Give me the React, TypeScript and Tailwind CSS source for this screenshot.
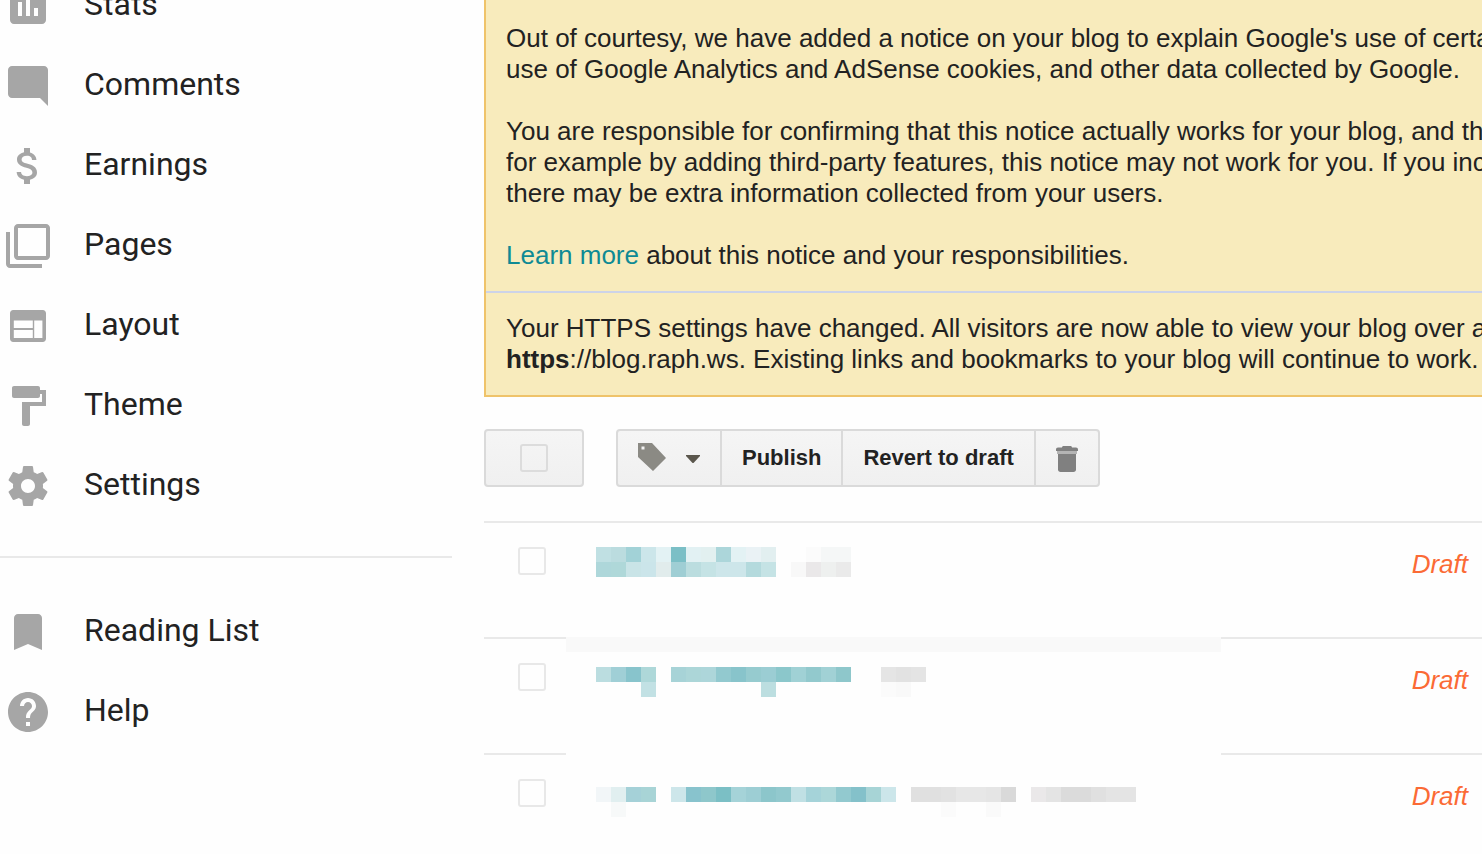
import type { ReactNode } from "react";

type NavItem = { label: string; icon: ReactNode };

const blogNav: NavItem[] = [
  {
    label: "Stats",
    icon: <path d="M19 3H5c-1.1 0-2 .9-2 2v14c0 1.1.9 2 2 2h14c1.1 0 2-.9 2-2V5c0-1.1-.9-2-2-2zM9 17H7v-7h2v7zm4 0h-2V7h2v10zm4 0h-2v-4h2v4z" />,
  },
  {
    label: "Comments",
    icon: <path d="M22 4c0-1.1-.9-2-2-2H4c-1.1 0-2 .9-2 2v12c0 1.1.9 2 2 2h14l4 4V4z" />,
  },
  {
    label: "Earnings",
    icon: <path d="M11.8 10.9c-2.27-.59-3-1.2-3-2.15 0-1.09 1.01-1.85 2.7-1.85 1.78 0 2.44.85 2.5 2.1h2.21c-.07-1.72-1.12-3.3-3.21-3.81V3h-3v2.16c-1.94.42-3.5 1.68-3.5 3.61 0 2.31 1.91 3.46 4.7 4.13 2.5.6 3 1.48 3 2.41 0 .69-.49 1.79-2.7 1.79-2.06 0-2.87-.92-2.98-2.1h-2.2c.12 2.19 1.76 3.42 3.68 3.83V21h3v-2.15c1.95-.37 3.5-1.5 3.5-3.55 0-2.84-2.43-3.81-4.7-4.4z" />,
  },
  {
    label: "Pages",
    icon: <path d="M3 5H1v16c0 1.1.9 2 2 2h16v-2H3V5zm18-4H7c-1.1 0-2 .9-2 2v14c0 1.1.9 2 2 2h14c1.1 0 2-.9 2-2V3c0-1.1-.9-2-2-2zm0 16H7V3h14v14z" />,
  },
  {
    label: "Layout",
    icon: <path fillRule="evenodd" d="M19.4 4H4.6C3.7 4 3 4.7 3 5.6v12.8c0 .9.7 1.6 1.6 1.6h14.8c.9 0 1.6-.7 1.6-1.6V5.6c0-.9-.7-1.6-1.6-1.6zM14.4 13V9.2H4.9V13h9.5zm0 1H4.9v4h9.5v-4zm4.8-4.8h-4.1V18h4.1V9.2z" />,
  },
  {
    label: "Theme",
    icon: <path d="M18 4V3c0-.55-.45-1-1-1H5c-.55 0-1 .45-1 1v4c0 .55.45 1 1 1h12c.55 0 1-.45 1-1V6h1v4H9v11c0 .55.45 1 1 1h2c.55 0 1-.45 1-1v-9h8V4h-3z" />,
  },
  {
    label: "Settings",
    icon: <path d="M19.43 12.98c.04-.32.07-.64.07-.98s-.03-.66-.07-.98l2.11-1.65c.19-.15.24-.42.12-.64l-2-3.46c-.12-.22-.39-.3-.61-.22l-2.49 1c-.52-.4-1.08-.73-1.69-.98l-.38-2.65C14.46 2.18 14.25 2 14 2h-4c-.25 0-.46.18-.49.42l-.38 2.65c-.61.25-1.17.59-1.69.98l-2.49-1c-.23-.09-.49 0-.61.22l-2 3.46c-.13.22-.07.49.12.64l2.11 1.65c-.04.32-.07.65-.07.98s.03.66.07.98l-2.11 1.65c-.19.15-.24.42-.12.64l2 3.46c.12.22.39.3.61.22l2.49-1c.52.4 1.08.73 1.69.98l.38 2.65c.03.24.24.42.49.42h4c.25 0 .46-.18.49-.42l.38-2.65c.61-.25 1.17-.59 1.69-.98l2.49 1c.23.09.49 0 .61-.22l2-3.46c.12-.22.07-.49-.12-.64l-2.11-1.65zM12 15.5c-1.93 0-3.5-1.57-3.5-3.5s1.57-3.5 3.5-3.5 3.5 1.57 3.5 3.5-1.57 3.5-3.5 3.5z" />,
  },
];

const generalNav: NavItem[] = [
  {
    label: "Reading List",
    icon: <path d="M17 3H7c-1.1 0-2 .9-2 2v16l7-3 7 3V5c0-1.1-.9-2-2-2z" />,
  },
  {
    label: "Help",
    icon: <path d="M12 2C6.48 2 2 6.48 2 12s4.48 10 10 10 10-4.48 10-10S17.52 2 12 2zm1 17h-2v-2h2v2zm2.07-7.75l-.9.92C13.45 12.9 13 13.5 13 15h-2v-.5c0-1.1.45-2.1 1.17-2.83l1.24-1.26c.37-.36.59-.86.59-1.41 0-1.1-.9-2-2-2s-2 .9-2 2H8c0-2.21 1.79-4 4-4s4 1.79 4 4c0 .88-.36 1.68-.93 2.25z" />,
  },
];

// Each tile is 15px square: [column, colours of consecutive tiles].
type TileRun = [number, string[]];
type Post = { tilesTop: number; upper: TileRun[]; lower: TileRun[]; kind: "line" | "band" | "blank" };

const posts: Post[] = [
  {
    kind: "line",
    tilesTop: 26,
    upper: [
      [0, ["#c0e0e3", "#bbdcdf", "#a2d2d7", "#cce6ea", "#e3f2f4", "#7bbfc6", "#e2f1f3", "#e2f0f0", "#acd6da", "#e3f2f4", "#eaf2f5", "#e2eff0"]],
      [14, ["#fbfbfb", "#f5f7f7", "#f5f7f7"]],
    ],
    lower: [
      [0, ["#aed7da", "#afd8d9", "#c9e4e7", "#cbe5ea", "#e1ecec", "#9fced4", "#bbdddf", "#c5e3e5", "#cde6ea", "#cde6ea", "#b4dadd", "#c5e3e5"]],
      [13, ["#f8f8f8", "#eae8e9", "#eef0ef", "#eaeaea"]],
    ],
  },
  {
    kind: "band",
    tilesTop: 30,
    upper: [
      [0, ["#bbdde0", "#a0cfd6", "#88c4cc", "#aed8d9"]],
      [5, ["#a7d3d7", "#acd6d8", "#add6da", "#92c9cf", "#88c4cb", "#96cbcf", "#9bcdd3", "#8bc7cb", "#a0d1d5", "#92c9cd", "#a1d1d5", "#8ec7cb"]],
      [19, ["#e5e5e5", "#e2e2e2", "#e4e4e4"]],
    ],
    lower: [
      [3, ["#c2e1e4"]],
      [11, ["#bcdee0"]],
      [19, ["#fbfbfb", "#f9f9f9"]],
    ],
  },
  {
    kind: "blank",
    tilesTop: 34,
    upper: [
      [0, ["#f2f6f8", "#e1eff0", "#a5d1d8", "#a8d4d6"]],
      [5, ["#cde6ea", "#88c3cd", "#8ec7cb", "#7bbfc5", "#a5d3d8", "#9dced4", "#8cc6cb", "#92c9ce", "#c0e0e4", "#a5d3d9", "#acd7d9", "#92c9cf", "#84c1ca", "#a7d4d6", "#cce6ea"]],
      [21, ["#e0e0e0", "#e0e0e0", "#e2e2e2", "#e7e7e7", "#e7e7e7", "#e5e5e5", "#d9d9d9"]],
      [29, ["#eae8e9", "#e4e4e4", "#dbdbdb", "#dbdbdb", "#e0e0e0", "#e4e4e4", "#e4e4e4"]],
    ],
    lower: [
      [1, ["#f7f9f9"]],
      [23, ["#fbfbfb"]],
      [26, ["#fafafa"]],
    ],
  },
];

function NavLink({ item }: { item: NavItem }) {
  return (
    <li>
      <a href="#" className="flex h-20 items-center gap-8 pl-1">
        <svg viewBox="0 0 24 24" className="size-12 shrink-0 fill-[#a6a6a6]" aria-hidden="true">
          {item.icon}
        </svg>
        <span className="pb-1 text-[32px] leading-10 whitespace-nowrap">{item.label}</span>
      </a>
    </li>
  );
}

function Checkbox({ label, className }: { label: string; className: string }) {
  return (
    <input
      type="checkbox"
      aria-label={label}
      className={`block size-7 shrink-0 appearance-none rounded-[3px] border-2 ${className}`}
    />
  );
}

function Tiles({ post }: { post: Post }) {
  const line = (runs: TileRun[], y: number) =>
    runs.flatMap(([start, colors]) =>
      colors.map((color, i) => (
        <rect key={`${y}-${start + i}`} x={30 + (start + i) * 15} y={y} width="15" height="15" fill={color} />
      )),
    );
  return (
    <svg width="655" height="116" viewBox="0 0 655 116" shapeRendering="crispEdges" className="block" aria-hidden="true">
      {post.kind === "line" && <rect width="655" height="2" fill="#e9e9e9" />}
      {post.kind === "band" && <rect width="655" height="15" fill="#f9f9f9" />}
      {line(post.upper, post.tilesTop)}
      {line(post.lower, post.tilesTop + 15)}
    </svg>
  );
}

const buttonBase =
  "flex h-[58px] items-center justify-center border-2 border-[#dadada] bg-linear-to-b from-[#f5f5f5] to-[#f0f0f0] text-[22px] font-bold whitespace-nowrap";

export default function App() {
  return (
    <div className="flex min-h-screen overflow-hidden bg-[#fefefe] font-['Liberation_Sans',Arial,sans-serif] text-[#222]">
      <nav className="-mt-[34px] w-[452px] shrink-0 font-[Roboto,sans-serif]">
        <ul>
          {blogNav.map((item) => (
            <NavLink key={item.label} item={item} />
          ))}
        </ul>
        <hr className="mt-[30px] mb-[34px] border-t-2 border-[#e9e9e9]" />
        <ul>
          {generalNav.map((item) => (
            <NavLink key={item.label} item={item} />
          ))}
        </ul>
      </nav>

      <main className="ml-8 min-w-0 flex-1 overflow-hidden">
        <section className="border-b-2 border-l-2 border-[#efc36a] bg-[#f8ebbc] text-[26px] leading-[31px] whitespace-nowrap">
          <div className="space-y-[31px] border-b-2 border-[#cdd3e8] pt-[23px] pb-5 pl-5">
            <p>
              Out of courtesy, we have added a notice on your blog to explain Google's use of certain
              <br />
              use of Google Analytics and AdSense cookies, and other data collected by Google.
            </p>
            <p>
              You are responsible for confirming that this notice actually works for your blog, and that
              <br />
              for example by adding third-party features, this notice may not work for you. If you include
              <br />
              there may be extra information collected from your users.
            </p>
            <p>
              <a href="#" className="text-[#0f8a94]">
                Learn more
              </a>{" "}
              about this notice and your responsibilities.
            </p>
          </div>
          <p className="py-5 pl-5">
            Your HTTPS settings have changed. All visitors are now able to view your blog over an
            <br />
            <b>https</b>://blog.raph.ws. Existing links and bookmarks to your blog will continue to work.
          </p>
        </section>

        <div className="mt-8 flex gap-8">
          <div className={`${buttonBase} w-[100px] rounded-[4px]`}>
            <Checkbox label="Select all posts" className="border-[#dcdcdc]" />
          </div>
          <div className="flex -space-x-[2px]">
            <button type="button" aria-label="Label selected posts" className={`${buttonBase} w-[106px] gap-5 rounded-l-[4px] pb-[2px]`}>
              <svg width="28" height="28" viewBox="0 0 28 28" aria-hidden="true">
                <path fillRule="evenodd" fill="#8b8a84" d="M0 0h14l14 15-13 13L0 14zM3.5 3.5v3h3v-3z" />
              </svg>
              <svg width="14" height="8" viewBox="0 0 14 8" className="mt-1" aria-hidden="true">
                <path fill="#5b574d" d="M0 0h14v1L7.5 8h-1L0 1z" />
              </svg>
            </button>
            <button type="button" className={`${buttonBase} px-5 pb-[2px]`}>
              Publish
            </button>
            <button type="button" className={`${buttonBase} px-5 pb-[2px]`}>
              Revert to draft
            </button>
            <button type="button" aria-label="Delete selected posts" className={`${buttonBase} w-[66px] rounded-r-[4px] pt-[2px]`}>
              <svg width="22" height="26" viewBox="0 0 22 26" aria-hidden="true">
                <path fill="#808080" d="M6 1.5C6 .6 6.7 0 7.500 0h7c.8 0 1.5.6 1.5 1.5h4c1.2 0 2 .8 2 2V5H0V3.500c0-1.2.8-2 2-2z" />
                <path fill="#b4b4b4" d="M1 5h20v3H1z" />
                <path fill="#808080" d="M2 8h18v15.500c0 1.5-1 2.5-2.5 2.500h-13C3 26 2 25 2 23.500z" />
              </svg>
            </button>
          </div>
        </div>

        <table className="mt-[34px] w-full table-fixed border-collapse">
          <colgroup>
            <col className="w-[82px]" />
            <col className="w-[655px]" />
            <col />
          </colgroup>
          <tbody>
            {posts.map((post, i) => (
              <tr key={i} className="align-top">
                <td className="p-0">
                  <div className="h-[116px] border-t-2 border-[#e9e9e9] pt-6 pl-[34px]">
                    <Checkbox label={`Select post ${i + 1}`} className="border-[#e8e8e8]" />
                  </div>
                </td>
                <td className="p-0">
                  <Tiles post={post} />
                </td>
                <td className="p-0">
                  <div className="h-[116px] border-t-2 border-[#e9e9e9] pt-[26px] pr-[14px] text-right text-[26px] leading-[30px] text-[#fb6a35] italic">
                    Draft
                  </div>
                </td>
              </tr>
            ))}
          </tbody>
        </table>
      </main>
    </div>
  );
}
